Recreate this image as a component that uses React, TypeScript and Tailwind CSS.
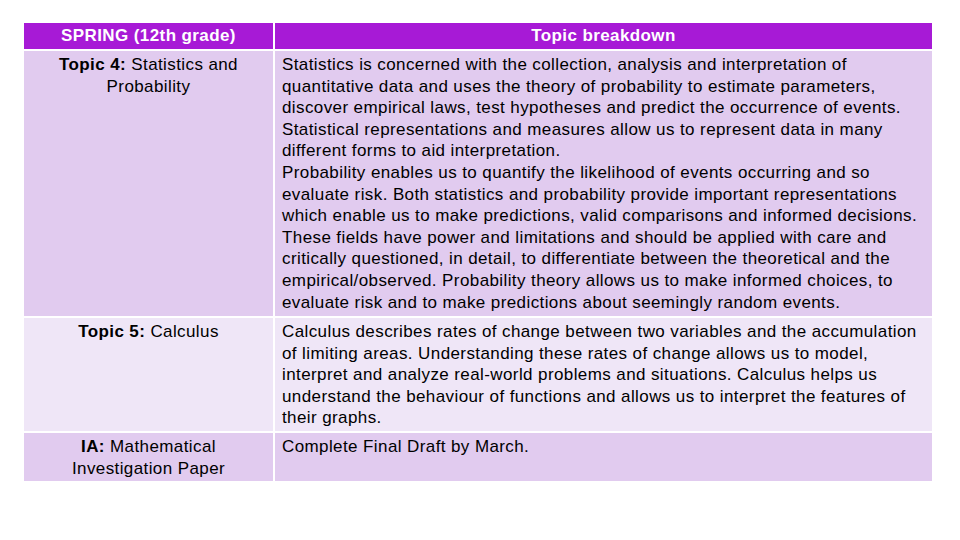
import React from 'react';

const rows = [
  {
    label: 'Topic 4:',
    rest: ' Statistics and Probability',
    bg: 'bg-[#e1cbef]',
    h: 'h-[265px]',
    text: [
      'Statistics is concerned with the collection, analysis and interpretation of quantitative data and uses the theory of probability to estimate parameters, discover empirical laws, test hypotheses and predict the occurrence of events. Statistical representations and measures allow us to represent data in many different forms to aid interpretation.',
      'Probability enables us to quantify the likelihood of events occurring and so evaluate risk. Both statistics and probability provide important representations which enable us to make predictions, valid comparisons and informed decisions. These fields have power and limitations and should be applied with care and critically questioned, in detail, to differentiate between the theoretical and the empirical/observed. Probability theory allows us to make informed choices, to evaluate risk and to make predictions about seemingly random events.',
    ],
  },
  {
    label: 'Topic 5:',
    rest: ' Calculus',
    bg: 'bg-[#efe6f7]',
    h: 'h-[113px]',
    text: [
      'Calculus describes rates of change between two variables and the accumulation of limiting areas. Understanding these rates of change allows us to model, interpret and analyze real-world problems and situations. Calculus helps us understand the behaviour of functions and allows us to interpret the features of their graphs.',
    ],
  },
  {
    label: 'IA:',
    rest: ' Mathematical Investigation Paper',
    bg: 'bg-[#e1cbef]',
    h: 'h-[48px]',
    text: ['Complete Final Draft by March.'],
  },
];

export default function App() {
  return (
    <div className="w-[960px] h-[540px] bg-white pt-[23px] pl-[24px] font-['Liberation_Sans',Arial,sans-serif] text-[17px] tracking-[0.4px] leading-[21.6px] text-black">
      <div className="w-[908px] grid grid-cols-[249px_1fr] gap-[2px]">
        <div className="bg-[#a71ad6] h-[26px] flex items-center justify-center text-white font-bold">
          SPRING (12th grade)
        </div>
        <div className="bg-[#a71ad6] h-[26px] flex items-center justify-center text-white font-bold">
          Topic breakdown
        </div>
        {rows.map((r) => (
          <React.Fragment key={r.label}>
            <div className={`${r.bg} ${r.h} px-[8px] pt-[3px] text-center`}>
              <span className="font-bold">{r.label}</span>
              {r.rest}
            </div>
            <div className={`${r.bg} ${r.h} pl-[7px] pr-[4px] pt-[3px]`}>
              {r.text.map((t, i) => (
                <p key={i}>{t}</p>
              ))}
            </div>
          </React.Fragment>
        ))}
      </div>
    </div>
  );
}
